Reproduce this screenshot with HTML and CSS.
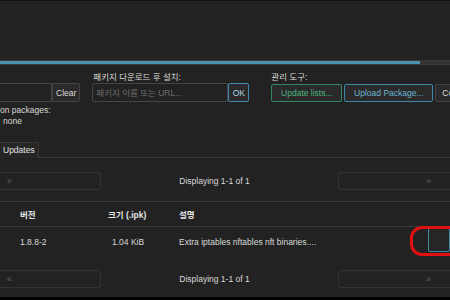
FILE: index.html
```html
<!DOCTYPE html>
<html lang="ko">
<head>
  <meta charset="UTF-8" />
  <title>Software - LuCI</title>
  <link rel="stylesheet" href="styles.css">
</head>
<body>

<div class="page">
  <div class="topline"></div>
  <div class="spacer"></div>

  <div class="meter"><div class="meter-fill"></div></div>

  <section class="controls">
    <div class="group group-filter">
      <label class="group-label">&nbsp;</label>
      <div class="field">
        <input type="text" class="text-input filter-input">
        <button class="btn btn-plain">Clear</button>
      </div>
    </div>
    <div class="group group-install">
      <label class="group-label">패키지 다운로드 후 설치:</label>
      <div class="field">
        <input type="text" class="text-input install-input" placeholder="패키지 이름 또는 URL...">
        <button class="btn btn-ok">OK</button>
      </div>
    </div>
    <div class="group group-actions">
      <label class="group-label">관리 도구:</label>
      <div class="field">
        <button class="btn btn-green">Update lists...</button>
        <button class="btn btn-blue">Upload Package...</button>
        <button class="btn btn-plain btn-config">Configure opkg...</button>
      </div>
    </div>
  </section>

  <section class="display">
    <div>on packages:</div>
    <div class="display-opt">none</div>
  </section>

  <nav class="tabs">
    <span class="tab">Updates</span>
  </nav>

  <div class="pager">
    <span class="pager-btn pager-prev">«</span>
    <span class="pager-info">Displaying 1-1 of 1</span>
    <span class="pager-btn pager-next">»</span>
  </div>

  <div class="table">
    <div class="row row-head">
      <span></span>
      <span>버전</span>
      <span>크기 (.ipk)</span>
      <span>설명</span>
      <span></span>
    </div>
    <div class="row">
      <span></span>
      <span>1.8.8-2</span>
      <span class="size">1.04 KiB</span>
      <span>Extra iptables nftables nft binaries....</span>
      <span class="cell-action"><button class="btn btn-row"></button></span>
    </div>
  </div>

  <div class="pager">
    <span class="pager-btn pager-prev">«</span>
    <span class="pager-info">Displaying 1-1 of 1</span>
    <span class="pager-btn pager-next">»</span>
  </div>

  <!-- annotation drawn over the screenshot -->
  <div class="mark"></div>
</div>

</body>
</html>
```

FILE: styles.css
```css
html {
  background: #000;
}

body {
  margin: 0;
  padding: 0;
  font-family: "Liberation Sans", "Noto Sans CJK KR", sans-serif;
  font-size: 8.5px;
  color: #d8d8d8;
  overflow: hidden;
}

.page {
  position: relative;
  height: 297px;
  background: #222;
  overflow: hidden;
}

.topline {
  height: 1px;
  background: #111;
}

.spacer {
  height: 59px;
}

.meter {
  height: 3px;
  border-top: 1px solid #3a3a3a;
  border-bottom: 1px solid #3a3a3a;
  background: #333;
}

.meter-fill {
  width: 420px;
  height: 100%;
  background: #4a91ad;
}

/* controls row */
.controls {
  display: flex;
  margin-top: 7px;
}

.group-label {
  display: block;
  height: 11px;
  line-height: 11px;
  white-space: nowrap;
}

.field {
  display: flex;
  height: 19px;
}

.group-install {
  margin-left: 12px;
}

.group-install .group-label {
  padding-left: 1px;
}

.group-actions {
  margin-left: 22px;
}

.group-actions .btn {
  height: 18px;
  margin-top: 1px;
  margin-right: 2px;
}

.text-input {
  box-sizing: border-box;
  height: 19px;
  border: 1px solid #444;
  background: #222;
  color: #ccc;
  font: inherit;
  padding: 0 3px;
  outline: none;
}

.text-input::placeholder {
  color: #6e6e6e;
}

.filter-input {
  width: 52px;
  border-left: none;
  border-radius: 0;
}

.install-input {
  width: 136px;
  border-radius: 2px 0 0 2px;
}

.btn {
  box-sizing: border-box;
  height: 19px;
  padding: 0 3px;
  font: inherit;
  background: #2a2a2a;
  color: #ddd;
  border: 1px solid #444;
  border-radius: 2px;
  white-space: nowrap;
  cursor: pointer;
}

.btn-ok {
  width: 21px;
  border-color: #3d8cab;
  color: #a9d4e6;
}

.btn-green {
  width: 71px;
  border-color: #2c8a5c;
  color: #4fb47f;
}

.btn-blue {
  width: 89px;
  border-color: #3d88a6;
  color: #6db3d2;
}

.btn-config {
  padding-left: 6px;
}

/* display options */
.display {
  margin-top: 3px;
  line-height: 11px;
}

.display-opt {
  padding-left: 3px;
}

/* tabs */
.tabs {
  margin-top: 15px;
  height: 15px;
  border-bottom: 1px solid #3a3a3a;
  display: flex;
}

.tab {
  box-sizing: border-box;
  width: 39px;
  height: 16px;
  padding-left: 3px;
  line-height: 15px;
  background: #262626;
  border-top: 1px solid #3a3a3a;
  border-right: 1px solid #3a3a3a;
  border-radius: 0 3px 0 0;
  color: #e0e0e0;
}

/* pager */
.pager {
  display: grid;
  grid-template-columns: 101px 1fr 120px;
  height: 18px;
  margin-top: 14px;
  margin-right: -8px;
}

.pager-btn {
  box-sizing: border-box;
  height: 18px;
  line-height: 17px;
  border: 1px solid #333;
  border-radius: 3px;
  color: #666;
}

.pager-prev {
  border-left: none;
  border-radius: 0 3px 3px 0;
  padding-left: 7px;
}

.pager-next {
  text-align: right;
  padding-right: 26px;
}

.pager-info {
  line-height: 18px;
  text-align: center;
  padding-right: 10px;
}

/* table */
.table {
  margin-top: 11px;
  border-top: 1px solid #3a3a3a;
}

.table + .pager {
  margin-top: 13px;
}

.row {
  display: grid;
  grid-template-columns: 20px 88px 71px 1fr 22px;
  align-items: center;
  height: 30px;
}

.row-head {
  height: 24px;
  border-bottom: 1px solid #3a3a3a;
  font-weight: bold;
  color: #e4e4e4;
}

.row .size {
  padding-left: 4px;
}

.cell-action {
  display: flex;
  height: 30px;
  align-items: flex-start;
}

.btn-row {
  width: 28px;
  height: 24px;
  margin-top: 1px;
  border-color: #3d8aa5;
  background: #262626;
}

.mark {
  position: absolute;
  left: 410px;
  top: 226px;
  width: 48px;
  height: 24px;
  border: 3px solid #e01010;
  border-radius: 12px;
}
```
